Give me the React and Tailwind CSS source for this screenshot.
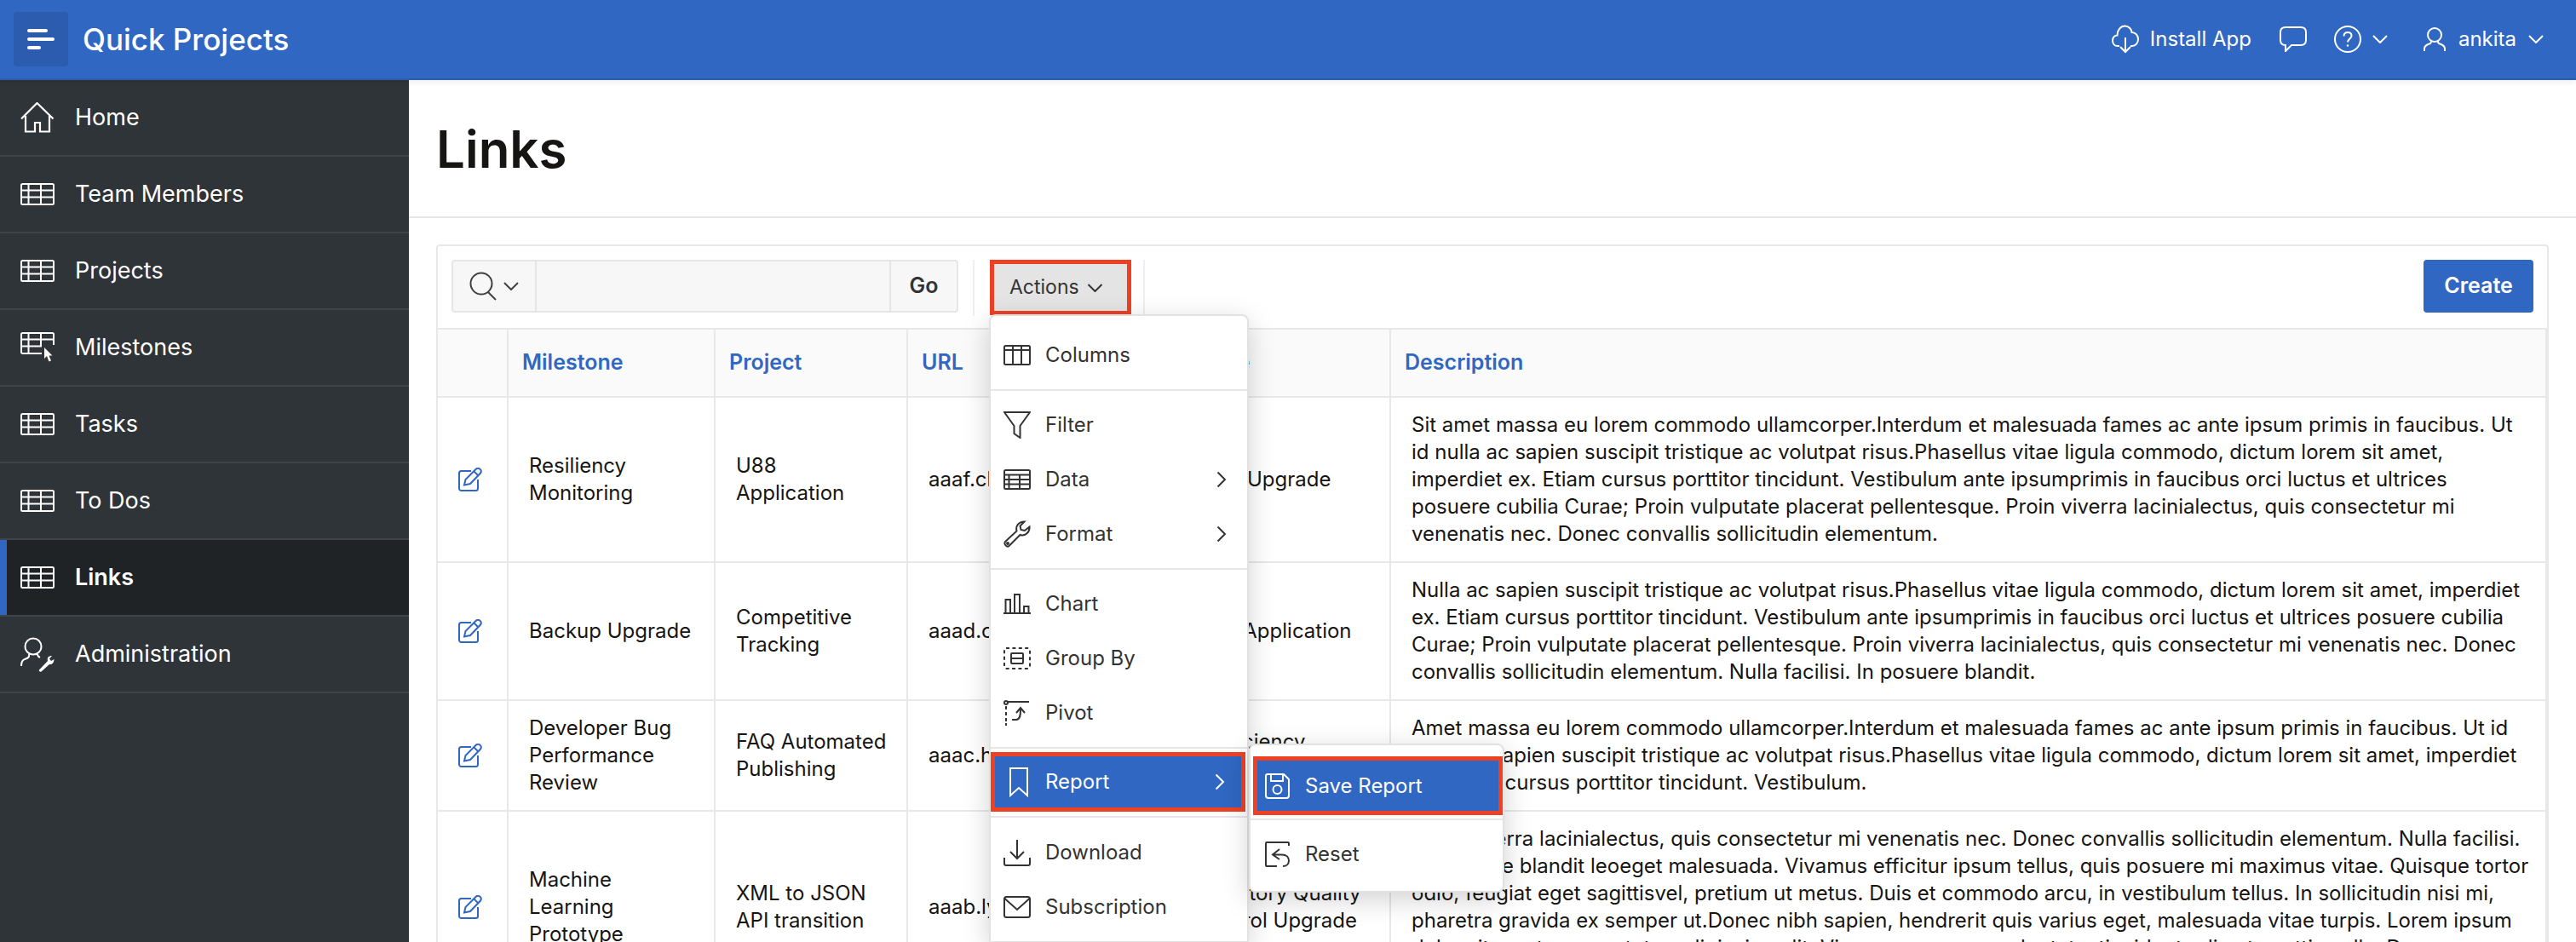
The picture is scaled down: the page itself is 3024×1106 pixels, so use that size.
import React from 'react';

// --- Small inline icons, the APEX icon set is not in the packages ---
const TableIcon = ({ className = 'w-[40px] h-[26px]' }) => (
  <svg viewBox="0 0 40 26" className={className} fill="none" stroke="currentColor" strokeWidth="2">
    <rect x="1" y="1" width="38" height="24" rx="1.5" />
    <path d="M1 8.5H39M1 16.5H39M9.5 1V25M24 1V25" />
  </svg>
);

const CursorTableIcon = () => (
  <svg viewBox="0 0 40 36" className="w-[40px] h-[36px]" fill="none" stroke="currentColor" strokeWidth="2">
    <path d="M25 25H2.5A1.5 1.5 0 0 1 1 23.5V2.5A1.5 1.5 0 0 1 2.5 1H37.5A1.5 1.5 0 0 1 39 2.5V15" />
    <path d="M1 8.5H39M1 16.5H25M9.5 1V25M24 1V16" />
    <path d="M28 18L28 31L31 28L33.5 34.500L36 33.500L33.500 27.500L37.500 27.500Z" fill="currentColor" stroke="none" />
  </svg>
);

const HomeIcon = () => (
  <svg viewBox="0 0 40 36" className="w-[40px] h-[36px]" fill="none" stroke="currentColor" strokeWidth="2.2">
    <path d="M1 19.500L19.500 1L38.500 19.500M6 16V34.500H17V24H23V34.500H34V16" />
  </svg>
);

const AdminIcon = () => (
  <svg viewBox="0 0 40 42" className="w-[40px] h-[42px]" fill="none" stroke="currentColor" strokeWidth="2">
    <circle cx="15" cy="12" r="9.500" />
    <path d="M10 21C11 25 8 26 5 27C2 28 1 30 1 35M20 21C20 23 21 24 23 25" />
    <path d="M22 39.500L32 29C31 25 33 23 37 23L34 26.500L36 29L39.500 27C39.500 31 37 33.500 34 33L24.500 41.500C23 42 21 41 22 39.500Z" fill="currentColor" stroke="none" />
  </svg>
);

const Chevron = ({ className = 'w-[18px] h-[10px]' }) => (
  <svg viewBox="0 0 18 10" className={className} fill="none" stroke="currentColor" strokeWidth="2">
    <path d="M1 1L9 9L17 1" />
  </svg>
);

const ChevronRight = ({ className = 'w-[12px] h-[20px]' }) => (
  <svg viewBox="0 0 12 20" className={className} fill="none" stroke="currentColor" strokeWidth="2">
    <path d="M1.500 1.500L10 10L1.500 18.500" />
  </svg>
);

const EditIcon = () => (
  <svg viewBox="0 0 28 28" className="w-[28px] h-[28px]" fill="none" stroke="#3067c2" strokeWidth="2">
    <path d="M15 4H3.500A2.500 2.500 0 0 0 1 6.500V24.500A2.500 2.500 0 0 0 3.500 27H20.500A2.500 2.500 0 0 0 23 24.500V14" />
    <path d="M7 20.500L8.500 14L20.500 2C22 0.500 24 0.500 25.500 1.800C27 3 27 5 26 6.500L14 19Z" />
    <path d="M18.500 4.500L23.500 9.500" />
  </svg>
);

const menuIcons = {
  columns: (
    <svg viewBox="0 0 32 24" className="w-[32px] h-[24px]" fill="none" stroke="currentColor" strokeWidth="2">
      <rect x="1" y="1" width="30" height="22" rx="1.500" />
      <path d="M1 6H31M11 1V23M21 1V23" />
    </svg>
  ),
  filter: (
    <svg viewBox="0 0 32 32" className="w-[32px] h-[32px]" fill="none" stroke="currentColor" strokeWidth="2">
      <path d="M1 1H31L19.500 17V31L12.500 26V17Z" />
    </svg>
  ),
  data: (
    <svg viewBox="0 0 32 24" className="w-[32px] h-[24px]" fill="none" stroke="currentColor" strokeWidth="2">
      <rect x="1" y="1" width="30" height="22" rx="1.500" />
      <path d="M1 6.500H31M1 12H31M1 17.500H31M6.500 6.500V23M19 6.500V23" />
    </svg>
  ),
  format: (
    <svg viewBox="0 0 32 32" className="w-[32px] h-[32px]" fill="none" stroke="currentColor" strokeWidth="2">
      <path d="M2 25L15.500 12.500C14 7 17.500 1.500 24.500 1.500L19.500 6.500L20.500 11L25 12L30.500 7.500C31 14 25 19 19.500 17L6.500 30C4 32 0 28 2 25Z" />
      <circle cx="5" cy="27" r="1" />
    </svg>
  ),
  chart: (
    <svg viewBox="0 0 32 24" className="w-[32px] h-[24px]" fill="none" stroke="currentColor" strokeWidth="2">
      <path d="M0 23H32M2.500 23V7H8V23M13 23V1H19V23M24 23V15H29.500V23" />
    </svg>
  ),
  group: (
    <svg viewBox="0 0 32 26" className="w-[32px] h-[26px]" fill="none" stroke="currentColor" strokeWidth="2">
      <rect x="1" y="1" width="30" height="24" rx="2" strokeDasharray="4 3.400" />
      <rect x="9" y="7" width="14" height="12" rx="1" />
      <path d="M9 13H23" />
    </svg>
  ),
  pivot: (
    <svg viewBox="0 0 32 32" className="w-[32px] h-[32px]" fill="none" stroke="currentColor" strokeWidth="2">
      <circle cx="3" cy="4" r="2" />
      <path d="M5 3H30M3 8V12M3 15V19M3 22V26M3 28V31" />
      <path d="M10 24H15C19 24 20 20 20 12M15 16L20 10L25 16" />
    </svg>
  ),
  report: (
    <svg viewBox="0 0 24 36" className="w-[24px] h-[36px]" fill="none" stroke="currentColor" strokeWidth="2">
      <path d="M2 2H22V34L12 25L2 34Z" />
    </svg>
  ),
  download: (
    <svg viewBox="0 0 32 32" className="w-[32px] h-[32px]" fill="none" stroke="currentColor" strokeWidth="2">
      <path d="M16 1V23M8 15L16 23L24 15M1 22V29C1 30 2 31 3 31H29C30 31 31 30 31 29V22" />
    </svg>
  ),
  subscription: (
    <svg viewBox="0 0 32 26" className="w-[32px] h-[26px]" fill="none" stroke="currentColor" strokeWidth="2">
      <rect x="1" y="1" width="30" height="24" rx="2.500" />
      <path d="M1.500 3L16 16L30.500 3" />
    </svg>
  ),
  save: (
    <svg viewBox="0 0 29 30" className="w-[29px] h-[30px]" fill="none" stroke="currentColor" strokeWidth="2">
      <path d="M3 1H22L28 7V26C28 28 27 29 25 29H4C2 29 1 28 1 26V3C1 2 2 1 3 1Z" />
      <path d="M7 1V9H21V1" />
      <circle cx="14.500" cy="19" r="5" />
    </svg>
  ),
  reset: (
    <svg viewBox="0 0 29 30" className="w-[29px] h-[30px]" fill="none" stroke="currentColor" strokeWidth="2">
      <path d="M14 29H2C1.500 29 1 28.500 1 28V2C1 1.500 1.500 1 2 1H27C27.500 1 28 1.500 28 2V5" />
      <path d="M17 9L9 15.500L17 21M9 15.500H20C25 15.500 28 18.500 28 22.500C28 26.500 25 29 21 29" />
    </svg>
  ),
};

const navItems = [
  { label: 'Home', icon: <HomeIcon /> },
  { label: 'Team Members', icon: <TableIcon /> },
  { label: 'Projects', icon: <TableIcon /> },
  { label: 'Milestones', icon: <CursorTableIcon /> },
  { label: 'Tasks', icon: <TableIcon /> },
  { label: 'To Dos', icon: <TableIcon /> },
  { label: 'Links', icon: <TableIcon />, active: true },
  { label: 'Administration', icon: <AdminIcon /> },
];

const rows = [
  {
    milestone: ['Resiliency', 'Monitoring'],
    project: ['U88', 'Application'],
    url: 'aaaf.cheap',
    name: ['Data Upgrade'],
    description: [
      'Sit amet massa eu lorem commodo ullamcorper.Interdum et malesuada fames ac ante ipsum primis in faucibus. Ut',
      'id nulla ac sapien suscipit tristique ac volutpat risus.Phasellus vitae ligula commodo, dictum lorem sit amet,',
      'imperdiet ex. Etiam cursus porttitor tincidunt. Vestibulum ante ipsumprimis in faucibus orci luctus et ultrices',
      'posuere cubilia Curae; Proin vulputate placerat pellentesque. Proin viverra lacinialectus, quis consectetur mi',
      'venenatis nec. Donec convallis sollicitudin elementum.',
    ],
  },
  {
    milestone: ['Backup Upgrade'],
    project: ['Competitive', 'Tracking'],
    url: 'aaad.com',
    name: ['U88 Application'],
    description: [
      'Nulla ac sapien suscipit tristique ac volutpat risus.Phasellus vitae ligula commodo, dictum lorem sit amet, imperdiet',
      'ex. Etiam cursus porttitor tincidunt. Vestibulum ante ipsumprimis in faucibus orci luctus et ultrices posuere cubilia',
      'Curae; Proin vulputate placerat pellentesque. Proin viverra lacinialectus, quis consectetur mi venenatis nec. Donec',
      'convallis sollicitudin elementum. Nulla facilisi. In posuere blandit.',
    ],
  },
  {
    milestone: ['Developer Bug', 'Performance', 'Review'],
    project: ['FAQ Automated', 'Publishing'],
    url: 'aaac.hair',
    name: ['Proficiency', 'Review'],
    description: [
      'Amet massa eu lorem commodo ullamcorper.Interdum et malesuada fames ac ante ipsum primis in faucibus. Ut id',
      'nulla ac sapien suscipit tristique ac volutpat risus.Phasellus vitae ligula commodo, dictum lorem sit amet, imperdiet',
      'ex. Etiam cursus porttitor tincidunt. Vestibulum.',
    ],
  },
  {
    milestone: ['Machine', 'Learning', 'Prototype'],
    project: ['XML to JSON', 'API transition'],
    url: 'aaab.ly',
    name: ['Inventory Quality', 'Control Upgrade'],
    description: [
      'Proin viverra lacinialectus, quis consectetur mi venenatis nec. Donec convallis sollicitudin elementum. Nulla facilisi.',
      'In posuere blandit leoeget malesuada. Vivamus efficitur ipsum tellus, quis posuere mi maximus vitae. Quisque tortor',
      'odio, feugiat eget sagittisvel, pretium ut metus. Duis et commodo arcu, in vestibulum tellus. In sollicitudin nisi mi,',
      'pharetra gravida ex semper ut.Donec nibh sapien, hendrerit quis varius eget, malesuada vitae turpis. Lorem ipsum',
      'dolor sit amet, consectetur adipiscing elit. Vivamus a magna vulputate, tincidunt odio at, mattis nulla. Donec',
      'convallis sollicitudin elementum.',
    ],
  },
];

const Lines = ({ lines }) =>
  lines.map((line, i) => (
    <div key={i} className="whitespace-nowrap">
      {line}
    </div>
  ));

const thClass = 'h-[80px] px-4 text-left align-middle text-[25px] font-semibold text-[#3067c2] border-r-2 border-[#e8e8e8]';
const tdClass = 'px-6 py-4 align-middle text-[24px] leading-[32px] text-[#161513] border-r-2 border-t-2 border-[#e8e8e8]';

const MenuItem = ({ icon, label, submenu }) => (
  <div className="h-[64px] flex items-center pl-[15px] pr-[24px] text-[#333333]">
    <span className="w-[32px] flex justify-center shrink-0">{menuIcons[icon]}</span>
    <span className="ml-[17px] text-[24px] flex-1">{label}</span>
    {submenu && <ChevronRight />}
  </div>
);

const Sep = () => <div className="h-[2px] bg-[#e6e6e6] my-[8px]" />;

const ActionsMenu = () => (
  <div className="absolute z-20 left-[-1px] top-[64px] w-[305px] bg-white border-2 border-[#e2e2e2] rounded-t-lg pt-[14px] shadow-[0_8px_32px_rgba(0,0,0,0.18)]">
    <MenuItem icon="columns" label="Columns" />
    <Sep />
    <MenuItem icon="filter" label="Filter" />
    <MenuItem icon="data" label="Data" submenu />
    <MenuItem icon="format" label="Format" submenu />
    <Sep />
    <MenuItem icon="chart" label="Chart" />
    <MenuItem icon="group" label="Group By" />
    <MenuItem icon="pivot" label="Pivot" />
    <div className="h-[2px] bg-[#e6e6e6] mt-[8px]" />
    <div className="h-[70px] mt-[4px] mb-[5px] mr-[2px] flex items-center pl-[14px] pr-[19px] bg-[#3067c2] border-[5px] border-[#ee4123] text-white">
      <span className="w-[28px] flex justify-center shrink-0">{menuIcons.report}</span>
      <span className="ml-[17px] text-[24px] flex-1">Report</span>
      <ChevronRight />
    </div>
    <div className="h-[2px] bg-[#e6e6e6] mb-[9px]" />
    <MenuItem icon="download" label="Download" />
    <MenuItem icon="subscription" label="Subscription" />
    <div className="h-[8px]" />

    {/* Report submenu */}
    <div className="absolute left-[303px] top-[502px] w-[300px] bg-white border-2 border-[#e2e2e2] rounded-lg pt-[13px] pb-[11px] pl-[3px] shadow-[0_8px_32px_rgba(0,0,0,0.18)]">
      <div className="h-[69px] flex items-center pl-[9px] bg-[#3067c2] border-[5px] border-[#ee4123] text-white">
        <span className="shrink-0">{menuIcons.save}</span>
        <span className="ml-[18px] text-[24px]">Save Report</span>
      </div>
      <div className="h-[2px] bg-[#e6e6e6] mt-[4px] mb-[8px] ml-[-3px]" />
      <div className="h-[64px] flex items-center pl-[14px] text-[#333333]">
        <span className="shrink-0">{menuIcons.reset}</span>
        <span className="ml-[18px] text-[24px]">Reset</span>
      </div>
    </div>
  </div>
);

const App = () => {
  return (
    <div className="h-screen overflow-hidden flex flex-col bg-white font-['Inter',sans-serif]">
      {/* --- Top bar --- */}
      <header className="h-[94px] shrink-0 flex items-center bg-[#3067c2] border-b-2 border-[#2b5cae] text-white pl-4 pr-[38px] relative z-10 shadow-[0_2px_8px_rgba(0,0,0,0.08)]">
        <div className="w-[64px] h-[64px] rounded bg-[#2b5cae] flex items-center justify-center">
          <svg viewBox="0 0 32 26" className="w-[32px] h-[26px]" fill="none" stroke="currentColor" strokeWidth="4" strokeLinecap="round">
            <path d="M2 3H22M2 13H30M2 23H14" />
          </svg>
        </div>
        <div className="ml-[17px] text-[35px] font-medium flex-1">Quick Projects</div>
        <svg viewBox="0 0 32 34" className="w-[32px] h-[34px]" fill="none" stroke="currentColor" strokeWidth="2">
          <path d="M9 25H7C3 25 1 22 1 18.500C1 15 3.500 12.500 6.500 12.500C6.500 6 10.500 1.500 15.500 1.500C20 1.500 23 5 23.500 9C28 9 31 12.500 31 17C31 21.500 28 25 24 25H22" />
          <path d="M16 15V32M10 26L16 32L22 26" />
        </svg>
        <span className="ml-[13px] text-[24px]">Install App</span>
        <svg viewBox="0 0 32 30" className="ml-[33px] w-[32px] h-[30px]" fill="none" stroke="currentColor" strokeWidth="2">
          <path d="M7 1H25C29 1 31 3 31 7V16C31 20 29 22 25 22H14L7 29V22C3 22 1 20 1 16V7C1 3 3 1 7 1Z" />
        </svg>
        <svg viewBox="0 0 32 32" className="ml-[32px] w-[32px] h-[32px]" fill="none" stroke="currentColor" strokeWidth="2">
          <circle cx="16" cy="16" r="15" />
          <path d="M11.500 12.500C11.500 9.500 13.500 8 16 8C18.500 8 20.500 9.500 20.500 12C20.500 15.500 16 15.500 16 19.500" />
          <circle cx="16" cy="23.500" r="1.200" fill="currentColor" stroke="none" />
        </svg>
        <Chevron className="ml-[13px] w-[18px] h-[10px]" />
        <svg viewBox="0 0 26 30" className="ml-[42px] w-[26px] h-[30px]" fill="none" stroke="currentColor" strokeWidth="2">
          <circle cx="13" cy="10" r="8" />
          <path d="M1 29V26C1 22 5 21 8 20C9.500 19 9 17 8.500 16.500M25 29V26C25 22 21 21 18 20C16.500 19 17 17 17.500 16.500" />
        </svg>
        <span className="ml-[15px] text-[24px]">ankita</span>
        <Chevron className="ml-[14px] w-[18px] h-[10px]" />
      </header>

      <div className="flex-1 flex min-h-0">
        {/* --- Side navigation --- */}
        <aside className="w-[480px] shrink-0 bg-[#2f3438]">
          {navItems.map((item) => (
            <div
              key={item.label}
              className={`h-[90px] flex items-center border-b-2 border-[#404448] text-white ${
                item.active ? 'bg-[#1f2326]' : ''
              }`}
            >
              {item.active && <div className="w-[8px] self-stretch bg-[#3067c2]" />}
              <span className={`flex justify-center w-[40px] shrink-0 ${item.active ? 'ml-[16px]' : 'ml-[24px]'}`}>{item.icon}</span>
              <span className={`ml-[24px] text-[27px] ${item.active ? 'font-semibold' : ''}`}>{item.label}</span>
            </div>
          ))}
        </aside>

        {/* --- Page body --- */}
        <main className="flex-1 min-w-0">
          <div className="h-[162px] flex items-center px-[32px] pt-[2px] border-b-2 border-[#e5e5e5]">
            <h1 className="text-[60px] font-semibold text-[#161513]">Links</h1>
          </div>

          <div className="mt-[31px] mx-[32px] border-2 border-b-0 border-[#e8e8e8] rounded-t">
            {/* Toolbar */}
            <div className="h-[96px] flex items-start pt-[16px] pl-[16px] pr-[16px]">
              <div className="flex h-[62px] w-[595px] bg-[#f7f7f7] border-2 border-[#e6e6e6] rounded">
                <div className="w-[98px] shrink-0 flex items-center justify-center gap-[6px] text-[#404040] border-r-2 border-[#e6e6e6]">
                  <svg viewBox="0 0 34 34" className="w-[34px] h-[34px]" fill="none" stroke="currentColor" strokeWidth="2">
                    <circle cx="14" cy="14" r="12.500" />
                    <path d="M22 24L31 33" />
                  </svg>
                  <Chevron className="w-[18px] h-[10px]" />
                </div>
                <div className="flex-1" />
                <div className="w-[79px] shrink-0 flex items-center justify-center text-[25px] font-semibold text-[#333333] border-l-2 border-[#e6e6e6]">
                  Go
                </div>
              </div>
              <div className="ml-[17px] w-[2px] h-[66px] bg-[#efefef]" />
              <div className="relative ml-[18px]">
                <div className="w-[166px] h-[65px] flex items-center pl-[18px] gap-[9px] bg-[#e4e4e4] border-[5px] border-[#ee4123] text-[23px] text-[#333333]">
                  Actions
                  <Chevron className="w-[19px] h-[10px]" />
                </div>
                <ActionsMenu />
              </div>
              <div className="ml-[14px] w-[2px] h-[66px] bg-[#efefef]" />
              <div className="ml-auto w-[129px] h-[62px] flex items-center justify-center rounded bg-[#3067c2] text-white text-[25px] font-semibold">
                Create
              </div>
            </div>

            {/* Report table */}
            <table className="w-[2476px] table-fixed border-collapse">
              <colgroup>
                <col className="w-[82px]" />
                <col className="w-[243px]" />
                <col className="w-[226px]" />
                <col className="w-[315px]" />
                <col className="w-[252px]" />
                <col />
              </colgroup>
              <thead>
                <tr className="bg-[#fafafa] border-t-2 border-[#e8e8e8]">
                  <th className={thClass} />
                  <th className={thClass}>Milestone</th>
                  <th className={thClass}>Project</th>
                  <th className={thClass}>URL</th>
                  <th className={thClass}>Name</th>
                  <th className={thClass}>Description</th>
                </tr>
              </thead>
              <tbody>
                {rows.map((row) => (
                  <tr key={row.url}>
                    <td className={tdClass}>
                      <EditIcon />
                    </td>
                    <td className={tdClass}>
                      <Lines lines={row.milestone} />
                    </td>
                    <td className={tdClass}>
                      <Lines lines={row.project} />
                    </td>
                    <td className={`${tdClass} text-[#3067c2]`}>{row.url}</td>
                    <td className={tdClass}>
                      <Lines lines={row.name} />
                    </td>
                    <td className={tdClass}>
                      <Lines lines={row.description} />
                    </td>
                  </tr>
                ))}
              </tbody>
            </table>
          </div>
        </main>
      </div>
    </div>
  );
};

export default App;
